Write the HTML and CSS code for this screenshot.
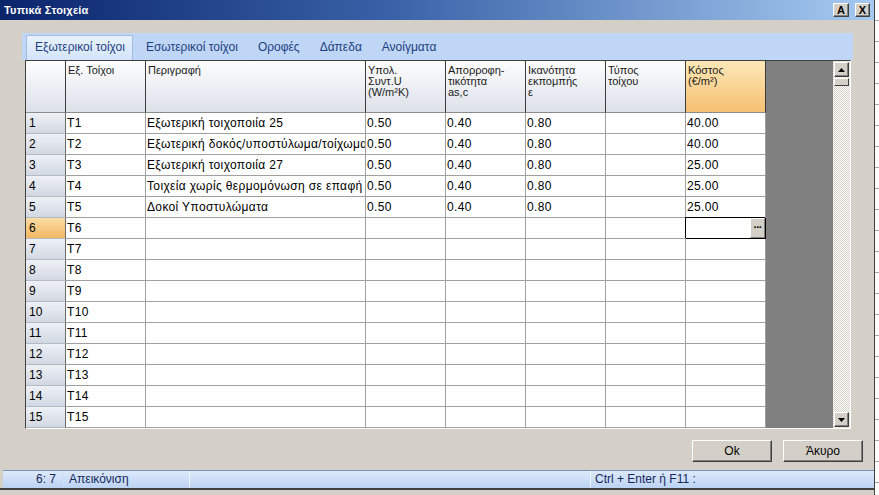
FILE: index.html
```html
<!DOCTYPE html>
<html lang="el">
<head>
<meta charset="utf-8">
<title>Τυπικά Στοιχεία</title>
<link rel="stylesheet" href="styles.css">
</head>
<body>
<div class="screen">
  <div class="window">
    <div class="titlebar">
      <span class="title">Τυπικά Στοιχεία</span>
      <div class="tbtns">
        <span class="tbtn tbtn-a">A</span>
        <span class="tbtn tbtn-x">X</span>
      </div>
    </div>
    <div class="client">
      <div class="tabband">
        <div class="tab active">Εξωτερικοί τοίχοι</div>
        <div class="tab second">Εσωτερικοί τοίχοι</div>
        <div class="tab">Οροφές</div>
        <div class="tab">Δάπεδα</div>
        <div class="tab">Ανοίγματα</div>
      </div>
      <div class="gridwrap">
        <div class="grid">
          <div class="h corner"></div>
          <div class="h">Εξ. Τοίχοι</div>
          <div class="h">Περιγραφή</div>
          <div class="h">Υπολ.<br>Συντ.U<br>(W/m²K)</div>
          <div class="h">Απορροφη-<br>τικότητα<br>as,c</div>
          <div class="h">Ικανότητα<br>εκπομπής<br>ε</div>
          <div class="h">Τύπος<br>τοίχου</div>
          <div class="h sel">Κόστος<br>(€/m²)</div>

          <div class="rh">1</div><div class="c">T1</div><div class="c">Εξωτερική τοιχοποιία 25</div><div class="c">0.50</div><div class="c">0.40</div><div class="c">0.80</div><div class="c"></div><div class="c">40.00</div>
          <div class="rh">2</div><div class="c">T2</div><div class="c">Εξωτερική δοκός/υποστύλωμα/τοίχωμα</div><div class="c">0.50</div><div class="c">0.40</div><div class="c">0.80</div><div class="c"></div><div class="c">40.00</div>
          <div class="rh">3</div><div class="c">T3</div><div class="c">Εξωτερική τοιχοποιία 27</div><div class="c">0.50</div><div class="c">0.40</div><div class="c">0.80</div><div class="c"></div><div class="c">25.00</div>
          <div class="rh">4</div><div class="c">T4</div><div class="c">Τοιχεία χωρίς θερμομόνωση σε επαφή</div><div class="c">0.50</div><div class="c">0.40</div><div class="c">0.80</div><div class="c"></div><div class="c">25.00</div>
          <div class="rh">5</div><div class="c">T5</div><div class="c">Δοκοί Υποστυλώματα</div><div class="c">0.50</div><div class="c">0.40</div><div class="c">0.80</div><div class="c"></div><div class="c">25.00</div>
          <div class="rh sel">6</div><div class="c">T6</div><div class="c"></div><div class="c"></div><div class="c"></div><div class="c"></div><div class="c"></div><div class="c edit"><span class="ellipsis">···</span></div>
          <div class="rh">7</div><div class="c">T7</div><div class="c"></div><div class="c"></div><div class="c"></div><div class="c"></div><div class="c"></div><div class="c"></div>
          <div class="rh">8</div><div class="c">T8</div><div class="c"></div><div class="c"></div><div class="c"></div><div class="c"></div><div class="c"></div><div class="c"></div>
          <div class="rh">9</div><div class="c">T9</div><div class="c"></div><div class="c"></div><div class="c"></div><div class="c"></div><div class="c"></div><div class="c"></div>
          <div class="rh">10</div><div class="c">T10</div><div class="c"></div><div class="c"></div><div class="c"></div><div class="c"></div><div class="c"></div><div class="c"></div>
          <div class="rh">11</div><div class="c">T11</div><div class="c"></div><div class="c"></div><div class="c"></div><div class="c"></div><div class="c"></div><div class="c"></div>
          <div class="rh">12</div><div class="c">T12</div><div class="c"></div><div class="c"></div><div class="c"></div><div class="c"></div><div class="c"></div><div class="c"></div>
          <div class="rh">13</div><div class="c">T13</div><div class="c"></div><div class="c"></div><div class="c"></div><div class="c"></div><div class="c"></div><div class="c"></div>
          <div class="rh">14</div><div class="c">T14</div><div class="c"></div><div class="c"></div><div class="c"></div><div class="c"></div><div class="c"></div><div class="c"></div>
          <div class="rh">15</div><div class="c">T15</div><div class="c"></div><div class="c"></div><div class="c"></div><div class="c"></div><div class="c"></div><div class="c"></div>
        </div>
        <div class="gray"></div>
        <div class="vscroll">
          <div class="sbtn up"><svg width="7" height="4" viewBox="0 0 7 4"><path d="M0 4 L3.5 0 L7 4 Z" fill="#000"/></svg></div>
          <div class="thumb"></div>
          <div class="track"></div>
          <div class="sbtn down"><svg width="7" height="4" viewBox="0 0 7 4"><path d="M0 0 L3.5 4 L7 0 Z" fill="#000"/></svg></div>
        </div>
      </div>
      <div class="actions">
        <div class="btn">Ok</div>
        <div class="btn">Άκυρο</div>
      </div>
    </div>
    <div class="statusbar">
      <div class="sp sp1">6: 7</div>
      <div class="sp sp2">Απεικόνιση</div>
      <div class="sp sp3"></div>
      <div class="sp sp4">Ctrl + Enter ή F11 :</div>
    </div>
    <div class="bottomframe"></div>
  </div>
  <div class="behind"></div>
</div>
</body>
</html>
```
FILE: styles.css
```css
* { box-sizing: border-box; }
html, body { margin: 0; padding: 0; }
body {
  width: 879px;
  height: 495px;
  overflow: hidden;
  background: #fff;
  font-family: "Liberation Sans", Arial, sans-serif;
}
.screen { display: flex; height: 495px; }
.window {
  width: 875px;
  height: 495px;
  background: #d4d0c8;
  border-right: 1px solid #404040;
  display: flex;
  flex-direction: column;
}
.behind {
  flex: 1;
  background: repeating-linear-gradient(to bottom, #ffffff 0 20px, #a8a8a8 20px 21px);
}

/* title bar */
.titlebar {
  height: 20px;
  flex: none;
  background: linear-gradient(to right, #0a246a 0%, #3a62a8 45%, #a6caf0 100%);
  display: flex;
  align-items: center;
  justify-content: space-between;
  padding: 0 4px 0 4px;
}
.title { color: #fff; font-weight: bold; font-size: 11px; letter-spacing: 0.2px; }
.tbtns { display: flex; gap: 6px; }
.tbtn {
  width: 16px;
  height: 14px;
  background: #d4d0c8;
  border: 1px solid;
  border-color: #ffffff #404040 #404040 #ffffff;
  box-shadow: inset -1px -1px 0 #808080;
  font-size: 11px;
  font-weight: bold;
  line-height: 12px;
  text-align: center;
  color: #000;
}
.tbtn-x { width: 15px; }

/* client */
.client {
  flex: 1;
  display: flex;
  flex-direction: column;
  padding: 13px 11px 0 22px;
}
.tabband {
  height: 27px;
  flex: none;
  margin-right: 10px;
  background: #bfd6f6;
  display: flex;
  align-items: flex-end;
  padding-left: 4px;
}
.tab {
  height: 25px;
  padding: 0 10px;
  font-size: 12px;
  line-height: 24px;
  color: #1d3f80;
  white-space: nowrap;
}
.tab.second { margin-left: 3px; }
.tab.active {
  background: linear-gradient(#e9f2fd, #d3e4f9);
  border: 1px solid #a3bde0;
  border-bottom: none;
  border-radius: 2px 2px 0 0;
  padding: 0 7px 0 8px;
  line-height: 23px;
}

.gridwrap {
  height: 369px;
  flex: none;
  margin: 0 12px 0 3px;
  border-top: 1px solid #404040;
  border-left: 1px solid #404040;
  border-right: 1px solid #ffffff;
  border-bottom: 1px solid #ffffff;
  display: flex;
}
.grid {
  width: 740px;
  display: grid;
  grid-template-columns: 40px 80px 220px repeat(5, 80px);
  grid-template-rows: 52px repeat(15, 21px);
  background: #fff;
}
.h {
  background: linear-gradient(#fdfdfe, #dce1e9);
  border-right: 1px solid #3c3c3c;
  border-bottom: 1px solid #8c8c8c;
  font-size: 11px;
  line-height: 11px;
  padding: 4px 2px 0 2px;
  color: #1a1a1a;
  white-space: nowrap;
  overflow: hidden;
}
.h.sel { background: linear-gradient(#fde8b8, #f5c072); }
.rh {
  background: linear-gradient(#eef1f6, #d2d8e2);
  border-right: 1px solid #6a6a6a;
  border-bottom: 1px solid #b4bac4;
  font-size: 12px;
  line-height: 20px;
  padding-left: 3px;
  color: #000;
}
.rh.sel { background: linear-gradient(#fcdda6, #f2b762); }
.c {
  border-right: 1px solid #a0a0a0;
  border-bottom: 1px solid #a0a0a0;
  font-size: 12px;
  letter-spacing: 0.35px;
  line-height: 20px;
  padding-left: 1px;
  color: #000;
  white-space: nowrap;
  overflow: hidden;
}
.c.edit {
  display: flex;
  justify-content: flex-end;
  padding: 0;
  border-right-color: #000;
  border-bottom-color: #000;
  box-shadow: -1px -1px 0 #000;
  overflow: visible;
}
.ellipsis {
  width: 15px;
  background: #d4d0c8;
  border-top: 1px solid #ffffff;
  border-left: 1px solid #ffffff;
  border-right: 1px solid #808080;
  border-bottom: 1px solid #808080;
  font-size: 11px;
  font-weight: bold;
  line-height: 16px;
  text-align: center;
  letter-spacing: -1px;
}
.gray { width: 67px; background: #808080; }
.vscroll {
  width: 17px;
  display: flex;
  flex-direction: column;
  background: repeating-conic-gradient(#ffffff 0 25%, #d4d0c8 0 50%) 0 0 / 2px 2px;
  padding: 1px;
}
.sbtn {
  height: 15px;
  flex: none;
  background: #d4d0c8;
  border: 1px solid;
  border-color: #ffffff #404040 #404040 #ffffff;
  box-shadow: inset -1px -1px 0 #808080;
  display: flex;
  align-items: center;
  justify-content: center;
}
.thumb {
  height: 8px;
  flex: none;
  margin-top: 1px;
  background: #d4d0c8;
  border: 1px solid;
  border-color: #ffffff #404040 #404040 #ffffff;
}
.track { flex: 1; }

.actions {
  display: flex;
  justify-content: flex-end;
  gap: 11px;
  margin-top: 11px;
}
.btn {
  width: 80px;
  height: 22px;
  background: #d4d0c8;
  border: 1px solid;
  border-color: #ffffff #404040 #404040 #ffffff;
  box-shadow: inset -1px -1px 0 #808080;
  font-size: 12px;
  line-height: 20px;
  text-align: center;
  color: #000;
}

/* status bar */
.statusbar {
  height: 18px;
  flex: none;
  margin-left: 3px;
  border-top: 1px solid #7b92b6;
  background: linear-gradient(#dde9fb, #bcd3f3);
  display: flex;
  font-size: 12px;
  line-height: 17px;
  color: #16285a;
}
.sp { white-space: nowrap; overflow: hidden; border-right: 1px solid #eef4fd; }
.sp1 { width: 61px; text-align: right; padding-right: 7px; border-right-color: #d0def5; }
.sp2 { width: 126px; padding-left: 5px; }
.sp3 { width: 401px; }
.sp4 { flex: 1; padding-left: 4px; border-right: none; }
.bottomframe {
  height: 7px;
  flex: none;
  border-top: 2px solid #404040;
  background: #d4d0c8;
}
```
